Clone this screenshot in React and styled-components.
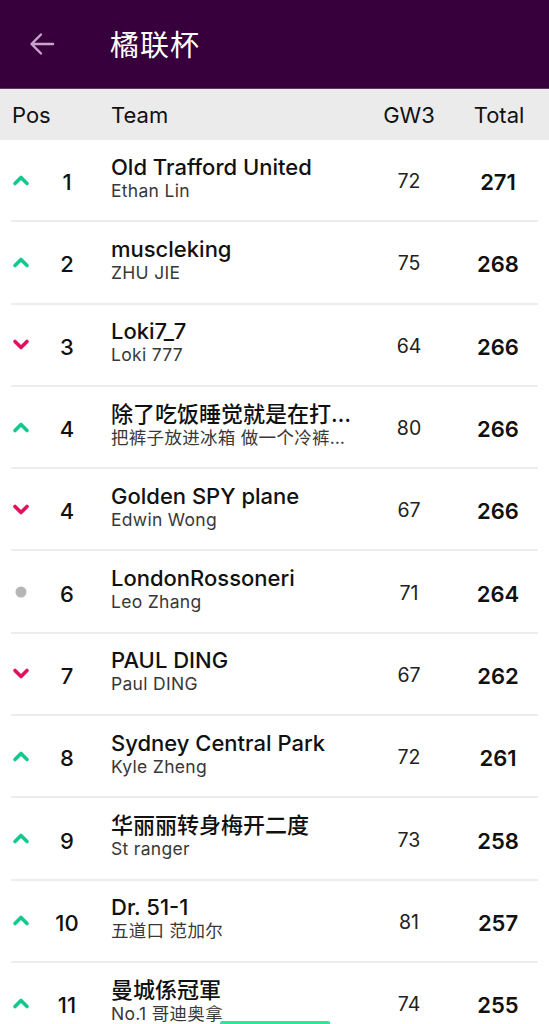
import React from 'react';
import styled, { createGlobalStyle } from 'styled-components';

const COLORS = {
  purple: '#37003c',
  arrow: '#c9a2cf',
  up: '#10c98b',
  down: '#e0115f',
  same: '#b5b5b8',
  headBg: '#ebebeb',
  divider: '#ededed',
  text: '#111111',
  sub: '#383838',
};

const FONT = `'Inter', 'Noto Sans CJK SC', sans-serif`;

const ROWS = [
  { pos: 1, move: 'up', team: 'Old Trafford United', manager: 'Ethan Lin', gw: 72, total: 271 },
  { pos: 2, move: 'up', team: 'muscleking', manager: 'ZHU JIE', gw: 75, total: 268 },
  { pos: 3, move: 'down', team: 'Loki7_7', manager: 'Loki 777', gw: 64, total: 266 },
  { pos: 4, move: 'up', team: '除了吃饭睡觉就是在打游戏', manager: '把裤子放进冰箱 做一个冷裤的人', gw: 80, total: 266 },
  { pos: 4, move: 'down', team: 'Golden SPY plane', manager: 'Edwin Wong', gw: 67, total: 266 },
  { pos: 6, move: 'same', team: 'LondonRossoneri', manager: 'Leo Zhang', gw: 71, total: 264 },
  { pos: 7, move: 'down', team: 'PAUL DING', manager: 'Paul DING', gw: 67, total: 262 },
  { pos: 8, move: 'up', team: 'Sydney Central Park', manager: 'Kyle Zheng', gw: 72, total: 261 },
  { pos: 9, move: 'up', team: '华丽丽转身梅开二度', manager: 'St ranger', gw: 73, total: 258 },
  { pos: 10, move: 'up', team: 'Dr. 51-1', manager: '五道口 范加尔', gw: 81, total: 257 },
  { pos: 11, move: 'up', team: '曼城係冠軍', manager: 'No.1 哥迪奥拿', gw: 74, total: 255 },
];

const GlobalStyle = createGlobalStyle`
  html, body {
    margin: 0;
    padding: 0;
    background: #ffffff;
    font-family: ${FONT};
    -webkit-font-smoothing: antialiased;
  }
  #root {
    width: 549px;
    height: 1024px;
    overflow: hidden;
    position: relative;
  }
`;

const MoveIcon = ({ move }) => {
  if (move === 'same') {
    return (
      <svg width="14" height="14" viewBox="0 0 14 14">
        <circle cx="7" cy="7" r="5.5" fill={COLORS.same} />
      </svg>
    );
  }
  const d = move === 'up' ? 'M3 9.5 L9 3.5 L15 9.5' : 'M3 3.5 L9 9.5 L15 3.5';
  return (
    <svg width="18" height="13" viewBox="0 0 18 13">
      <path d={d} fill="none" stroke={move === 'up' ? COLORS.up : COLORS.down} strokeWidth="3.6" strokeLinecap="round" strokeLinejoin="round" />
    </svg>
  );
};

const App = () => (
  <Page>
    <GlobalStyle />
    <TopBar>
      <BackButton aria-label="back">
        <svg width="28" height="26" viewBox="0 0 28 26">
          <path d="M25 13 H4 M13 3.5 L3.5 13 L13 22.5" fill="none" stroke={COLORS.arrow} strokeWidth="2.4" strokeLinecap="round" strokeLinejoin="round" />
        </svg>
      </BackButton>
      <Title>橘联杯</Title>
    </TopBar>

    <HeadRow>
      <HeadCell span={2}>Pos</HeadCell>
      <HeadCell indent>Team</HeadCell>
      <HeadCell align="center">GW3</HeadCell>
      <HeadCell align="center">Total</HeadCell>
    </HeadRow>

    <List>
      {ROWS.map((r, i) => (
        <Row key={i}>
          <IconCell><MoveIcon move={r.move} /></IconCell>
          <PosCell>{r.pos}</PosCell>
          <TeamCell>
            <TeamName>{r.team}</TeamName>
            <Manager>{r.manager}</Manager>
          </TeamCell>
          <Points>{r.gw}</Points>
          <Total>{r.total}</Total>
        </Row>
      ))}
    </List>

    <HomeIndicator />
  </Page>
);

const Page = styled.div`
  width: 549px;
  height: 1024px;
  overflow: hidden;
  background: #ffffff;
`;

const TopBar = styled.header`
  height: 89px;
  background: ${COLORS.purple};
  display: flex;
  align-items: center;
  border-bottom: 1px solid #5e3464;
  box-sizing: border-box;
`;

const BackButton = styled.div`
  width: 110px;
  padding-left: 28px;
  box-sizing: border-box;
  display: flex;
  align-items: center;
`;

const Title = styled.h1`
  margin: 0 0 2px;
  color: #ffffff;
  font-size: 29px;
  font-weight: 400;
  letter-spacing: 1px;
  font-family: 'Noto Sans CJK SC', sans-serif;
`;

// icon | pos | team | gameweek | total
const COLUMNS = '40px 54px 1fr 80px 100px';

const HeadRow = styled.div`
  display: grid;
  grid-template-columns: ${COLUMNS};
  align-items: center;
  height: 51px;
  background: ${COLORS.headBg};
`;

const HeadCell = styled.div`
  grid-column: span ${p => p.span || 1};
  padding-left: ${p => (p.span ? '12px' : p.indent ? '17px' : '0')};
  font-size: 22px;
  font-weight: 400;
  color: ${COLORS.text};
  text-align: ${p => p.align || 'left'};
`;

const List = styled.div`
  display: flex;
  flex-direction: column;
`;

const Row = styled.div`
  display: grid;
  grid-template-columns: ${COLUMNS};
  align-items: center;
  height: 82.3px;
  box-sizing: border-box;
  background: linear-gradient(${COLORS.divider}, ${COLORS.divider}) no-repeat 11px 100% / 527px 2px;
`;

const IconCell = styled.div`
  display: flex;
  align-items: center;
  justify-content: center;
  padding-left: 2px;
  padding-bottom: 2px;
`;

const PosCell = styled.div`
  text-align: center;
  font-size: 22px;
  font-weight: 500;
  color: ${COLORS.text};
  padding-top: 2px;
`;

const TeamCell = styled.div`
  display: flex;
  flex-direction: column;
  min-width: 0;
  padding: 0 14px 6px 17px;
`;

const TeamName = styled.div`
  font-size: 22px;
  line-height: 25px;
  font-weight: 500;
  color: ${COLORS.text};
  white-space: nowrap;
  overflow: hidden;
  text-overflow: ellipsis;
`;

const Manager = styled.div`
  font-size: 17.5px;
  line-height: 22px;
  letter-spacing: 0.3px;
  color: ${COLORS.sub};
  white-space: nowrap;
  overflow: hidden;
  text-overflow: ellipsis;
`;

const Points = styled.div`
  text-align: center;
  font-size: 19.5px;
  color: #222222;
`;

const Total = styled.div`
  text-align: center;
  font-size: 22px;
  font-weight: 600;
  color: ${COLORS.text};
  padding-top: 2px;
  padding-right: 2px;
`;

const HomeIndicator = styled.div`
  position: absolute;
  left: 220px;
  bottom: 0;
  width: 110px;
  height: 3px;
  background: #2de69b;
  border-radius: 2px 2px 0 0;
`;

export default App;
